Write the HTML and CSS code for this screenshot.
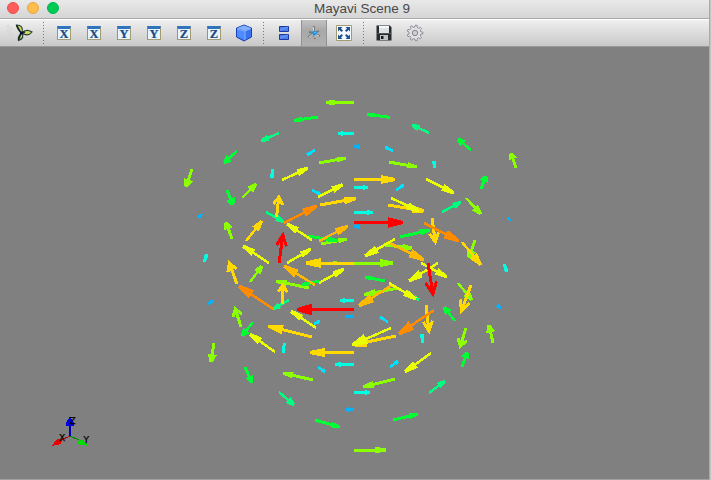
FILE: index.html
```html
<!DOCTYPE html>
<html lang="en">
<head>
<meta charset="utf-8">
<title>Mayavi Scene 9</title>
<link rel="stylesheet" href="styles.css">
</head>
<body>
<div class="window">
  <header class="titlebar">
    <div class="lights"><i class="light close"></i><i class="light minimize"></i><i class="light zoom"></i></div>
    <h1 class="title">Mayavi Scene 9</h1>
  </header>
  <nav class="toolbar">
    <svg class="logo" viewBox="0 0 32 26">
      <g fill="#f5f5f5" stroke="#bbb" stroke-width=".5"><circle cx="2" cy="6" r="1"/><circle cx="5" cy="8.500" r="1"/><circle cx="2" cy="11" r="1"/><circle cx="5" cy="14" r="1"/></g>
      <path d="M10.500 5Q18 5 16 13Q12 11 10.500 5ZM16 13Q20 8.500 26 12Q22 17 16 13ZM16 13Q19 18 12.500 20.500Q11.500 16 16 13Z" fill="#cddb62" stroke="#243d35" stroke-width="1.200"/>
      <path d="M10.500 5L15 13L12.500 20M15 13L19 12" fill="none" stroke="#14242c" stroke-width="1.500"/>
      <circle cx="15.500" cy="13" r="1.600" fill="#07102c"/>
    </svg>
    <i class="separator"></i>
    <span class="cell"><b class="axis">X</b></span>
    <span class="cell"><b class="axis">X</b></span>
    <span class="cell"><b class="axis">Y</b></span>
    <span class="cell"><b class="axis">Y</b></span>
    <span class="cell"><b class="axis">Z</b></span>
    <span class="cell"><b class="axis">Z</b></span>
    <span class="cell"><svg width="18" height="18" viewBox="0 0 18 18"><path d="M1.500 4L9 1L16.500 4V13L9 17L1.500 13Z" fill="#3973ef" stroke="#1741b4"/><path d="M2 4L9 1.500L16 4L10 6.500Z" fill="#85b2ff"/><path d="M2 5L10 7V16L2 12.500Z" fill="#4d8bff"/><path d="M2 5L10 7L16 4.500M10 7V16" fill="none" stroke="#a7c8ff" stroke-width=".7"/></svg></span>
    <i class="separator second"></i>
    <span class="cell split"><svg width="10" height="16" viewBox="0 0 10 16"><path d="M.5 1.500h9v5h-9zM.5 9.500h9v5h-9z" fill="#4c80ee" stroke="#1c399d"/><path d="M1 5L9 2M1 13L9 10" stroke="#6c9dfa"/></svg></span>
    <span class="cell active"><svg width="16" height="16" viewBox="0 0 16 16"><path d="M8 8V1M8 8L2 12M8 8L14 11M8 8L3 7M8 8L13 6M8 8L9 14" stroke="#777" stroke-width="1.800"/><path d="M7.500 7V2M7 9L3 12M9 9L13 11M9 10V13" stroke="#eee" stroke-width=".8"/><circle cx="8.500" cy="8" r="2.300" fill="#1598ee"/><circle cx="9" cy="7.500" r=".8" fill="#73ceff"/></svg></span>
    <span class="cell"><svg width="16" height="16" viewBox="0 0 16 16"><path d="M.5.500h15v15h-15z" fill="#f4faff" stroke="#a19b70"/><path d="M2 2H6.500L5 3.500L7 5.500L5.500 7L3.500 5L2 6.500ZM14 2V6.500L12.500 5L10.500 7L9 5.500L11 3.500L9.500 2ZM2 14V9.500L3.500 11L5.500 9L7 10.500L5 12.500L6.500 14ZM14 14H9.500L11 12.500L9 10.500L10.500 9L12.500 11L14 9.500Z" fill="#22528b"/></svg></span>
    <i class="separator third"></i>
    <span class="cell save"><svg width="16" height="16" viewBox="0 0 16 16"><path d="M1 .5h13l1.500 2v13H.5V.5Z" fill="#282b2d"/><path d="M3 1h10v7H3z" fill="#dce1e3"/><path d="M3 1h10v2H3z" fill="#f7f7f7"/><path d="M4 10h8v5H4z" fill="#bcc3c6"/><path d="M5 11h2.500v3H5z" fill="#171717"/><path d="M1 8.500h14" stroke="#555"/></svg></span>
    <span class="cell gear"><svg width="18" height="18" viewBox="-9 -9 18 18"><path id="gear-outline" fill="#e9e9ee" stroke="#85858c" stroke-width=".9" stroke-linejoin="round"/><circle r="2.700" fill="#cfcfcf" stroke="#85858c"/><circle r="4.200" fill="none" stroke="#c9c9cf" stroke-width=".6"/></svg></span>
  </nav>
  <main class="scene">
    <svg class="field" viewBox="0 47 709 432" role="img" aria-label="Vector field">
      <g id="vectors"></g>
      <g class="triad">
        <path d="M70 436V426" stroke="#0000b0" stroke-width="2"/><path d="M70 416L66 423V426H74V423Z" fill="#0000e8"/>
        <path d="M70 436L61 440" stroke="#c00"/><path d="M52 446L57 439L62 440L61 444Z" fill="#e60000"/>
        <path d="M70 436L79 440" stroke="#080"/><path d="M88 446L82 439L78 441L77 444Z" fill="#00dc00"/>
        <text x="59" y="441">X</text><text x="83.500" y="443">Y</text><text x="69.500" y="424">Z</text>
      </g>
    </svg>
  </main>
</div>
<script src="vectors.js"></script>
</body>
</html>
```
FILE: styles.css
```css
* { box-sizing: border-box; }
body { margin: 0; background: #c4c4c4; overflow: hidden; }
.window { width: 709px; height: 480px; display: flex; flex-direction: column; border-bottom: 1px solid #a0a0a0; box-shadow: 1px 0 #aaa; }
.titlebar { height: 19px; flex: none; display: grid; grid-template-columns: 64px 1fr 47px; border-bottom: 1px solid #aaa; background: linear-gradient(#e9e9e9, #d5d5d5); }
.lights { display: flex; gap: 8px; padding: 2px 0 0 7px; }
.light { width: 12px; height: 12px; border-radius: 50%; }
.close { background: #ff5c5c; border: 1px solid #e8504f; }
.minimize { background: #ffbd4c; border: 1px solid #e6a53b; }
.zoom { background: #00ca56; border: 1px solid #00b64b; }
.title { margin: 0; padding-right: 2px; text-align: center; font: 400 13.5px/17px "Liberation Sans", sans-serif; color: #484848; }
.toolbar { height: 28px; flex: none; display: flex; align-items: center; border-top: 1px solid #fff; border-bottom: 1px solid #999; background: linear-gradient(#efefef, #c8c8c8); }
.logo { width: 32px; height: 26px; margin-left: 6px; }
.separator { width: 1px; height: 22px; margin: 0 5px; background: repeating-linear-gradient(#777 0 1px, transparent 1px 3px); }
.cell { width: 30px; height: 26px; display: flex; align-items: center; justify-content: center; flex: none; }
.second { margin: 0 5px 0 4px; }
.split { width: 32px; padding-right: 3px; }
.active { width: 26px; background: linear-gradient(#c2c2c2, #a9a9a9 40%, #b0b0b0); border: solid #929292; border-width: 0 1px; }
.active + .cell { width: 34px; }
.third { margin: 0 5px 0 2px; }
.save { width: 30px; }
.gear { width: 31px; }
.axis { width: 14px; height: 14px; border: 1px solid #729daa; border-top: 3px solid #3074bd; border-right-color: #a49a74; border-bottom-color: #a49a74; background: #e7f5ff; color: #20477e; display: flex; justify-content: center; font: bold 12.5px/10px "Liberation Serif", serif; -webkit-text-stroke: .2px #20477e; }
.scene { height: 432px; background: #808080; }
.field { display: block; width: 709px; height: 432px; shape-rendering: crispEdges; }
.triad text { font: 9px "DejaVu Sans", sans-serif; fill: #000; stroke: #000; stroke-width: .25px; }
```
FILE: vectors.js
```javascript
// Each row lists tail x, tail y, tip x, tip y for one colour band.
const bands = {
  "#00b4ff": [[202,214,198,218],[354,146.5,360,146.5],[511,221,508,218],[354,226.5,360,226.5],[354,316.5,345,316.5],[208,304,213,301],[501,308,497,305],[354,409.5,346,409.5]],
  "#00e1ff": [[315,150,307,155],[312,190,321,195],[393,151,385,147],[396,190,404,185],[314,324,320,321],[388,322,380,317],[318,367,325,372],[390,367,398,361]],
  "#00ffe1": [[354,133.5,338,133.5],[272,169,272,178],[434,168,434,161],[354,187.5,368,187.5],[354,212.5,373,212.5],[204,262,207,254],[354,300.5,340,300.5],[504,264,507,272],[423,343,422,334],[284.5,343,283,353],[354,364.5,335,364.5],[354,392.5,370,392.5]],
  "#00ff80": [[279,133,261,141],[266,212,284,222],[429,133,412,125],[442,212,461,202],[289,300,273,309],[407,292,419,300],[279,392,294,405],[429,393,445,381]],
  "#8cff00": [[192,169,186,187],[242,198,256,184],[354,102.5,326,102.5],[319,163,346,158],[389,162,417,167],[516,168,511,153],[466,198,481,214],[232,239,226,222],[250,282,262,266],[321,244,347,239],[325,263,337,263],[309,288,276,281],[241,327,235,308],[385,245,412,248],[354,263,393,263],[475,240,469,258],[398,288,364,295],[458,283,472,300],[466,328,460,347],[493,343,489,325],[214,343,211,362],[313,380,283,373],[354,450,386,450],[395,379,363,387]],
  "#00ff33": [[237,151,224,163],[227,190,233,205],[318,117,294,120.5],[390,117.5,367,114],[471,150,458,139],[481,189,486,176],[308,236,338,241],[319,281,302,285],[253,322,242,336],[400,237,430,230],[385,281,365,277],[455,321,444,307],[245,367,252,383],[315,420,340,427],[393,420,418,414],[462,367,467,352]],
  "#ffd900": [[320,205,356,198.5],[276.5,217,279,196],[354,179.5,395,179.5],[388,205,424,211],[246,241,262,221],[237,284,229,262],[354,263,306,263],[282,304,283,284],[312,337,268,326],[432,218,435.5,243],[462,242,481,265],[471,285,461,312],[426,305,429,332],[396,336,352,345],[354,352.5,310,352.5]],
  "#ffb900": [[315,285,284,266],[319,241,348,226],[390,243,424,260],[392,285,359,306]],
  "#eaff00": [[282,180,308,168],[318,197,343,184.5],[391,198,419,211],[426,179,454,193],[269,263,243,246],[312,240,287,224],[287,263,311,249],[319,283,344,269],[316,328,291,311],[275,352,250,334],[395,239,365,256],[438,263,409,281],[421,263,447,277],[389,283,416,299],[391,328,352,345],[431,353,405,372]],
  "#ff8c00": [[284,223,317,206],[273,309,239,286],[424,223,459,241],[434,310,399,334]],
  "#ff0000": [[354,222.5,403,222.5],[279,263,283,234],[354,309.5,297,309.5],[428,263,433,295]]
};
// These arrows are covered by the lime and gold shafts at the same place.
const underneath = new Set(["407,292,419,300"]);
const group = document.getElementById("vectors");
function path(d, color, filled, width = 3) {
  const node = document.createElementNS("http://www.w3.org/2000/svg", "path");
  node.setAttribute("d", d);
  node.setAttribute("fill", filled ? color : "none");
  node.setAttribute("stroke", filled ? "none" : color);
  node.setAttribute("stroke-width", width);
  group.append(node);
}
for (const [color, rows] of Object.entries(bands)) {
  for (const row of rows) {
    const [x1, y1, x2, y2] = row;
    const dx = x2 - x1, dy = y2 - y1, length = Math.hypot(dx, dy);
    const ux = dx / length, uy = dy / length;
    const slope = Math.abs(uy);
    const steep = slope > .92;
    const head = Math.min(15, length * (slope > .35 ? .4 : .33));
    const small = length < 12;
    let half = Math.max(2.4, length * .105);
    if (slope > .35) half = Math.max(small ? 2 : 3.2, length * .12);
    if (slope > .6 && !small) half = Math.max(4, length * .15);
    if (steep && !small) half = Math.max(4.6, length * .17);
    if (underneath.has(row.join())) half = 2.2;
    const bx = x2 - ux * head, by = y2 - uy * head;
    path(`M${x1} ${y1}L${x2 - ux * 2} ${y2 - uy * 2}`, color, false, slope > .35 && slope < .85 ? 2.5 : 3);
    if (steep && length > 19.5) {
      path(`M${bx - uy * half} ${by + ux * half}L${x2 - ux} ${y2 - uy}L${bx + uy * half} ${by - ux * half}`, color, false);
    } else {
      path(`M${bx - uy * half} ${by + ux * half}L${x2 - uy * 1.5} ${y2 + ux * 1.5}L${x2 + uy * 1.5} ${y2 - ux * 1.5}L${bx + uy * half} ${by - ux * half}Z`, color, true);
    }
  }
}
// Gear outline with nine teeth.
const points = [];
for (let tooth = 0; tooth < 9; tooth++) {
  for (const [offset, radius] of [[-.25, 6], [-.17, 7.9], [.17, 7.9], [.25, 6]]) {
    const angle = (tooth + offset) * 2 * Math.PI / 9;
    points.push(`${Math.cos(angle) * radius} ${Math.sin(angle) * radius}`);
  }
}
document.getElementById("gear-outline").setAttribute("d", `M${points.join("L")}Z`);
```
